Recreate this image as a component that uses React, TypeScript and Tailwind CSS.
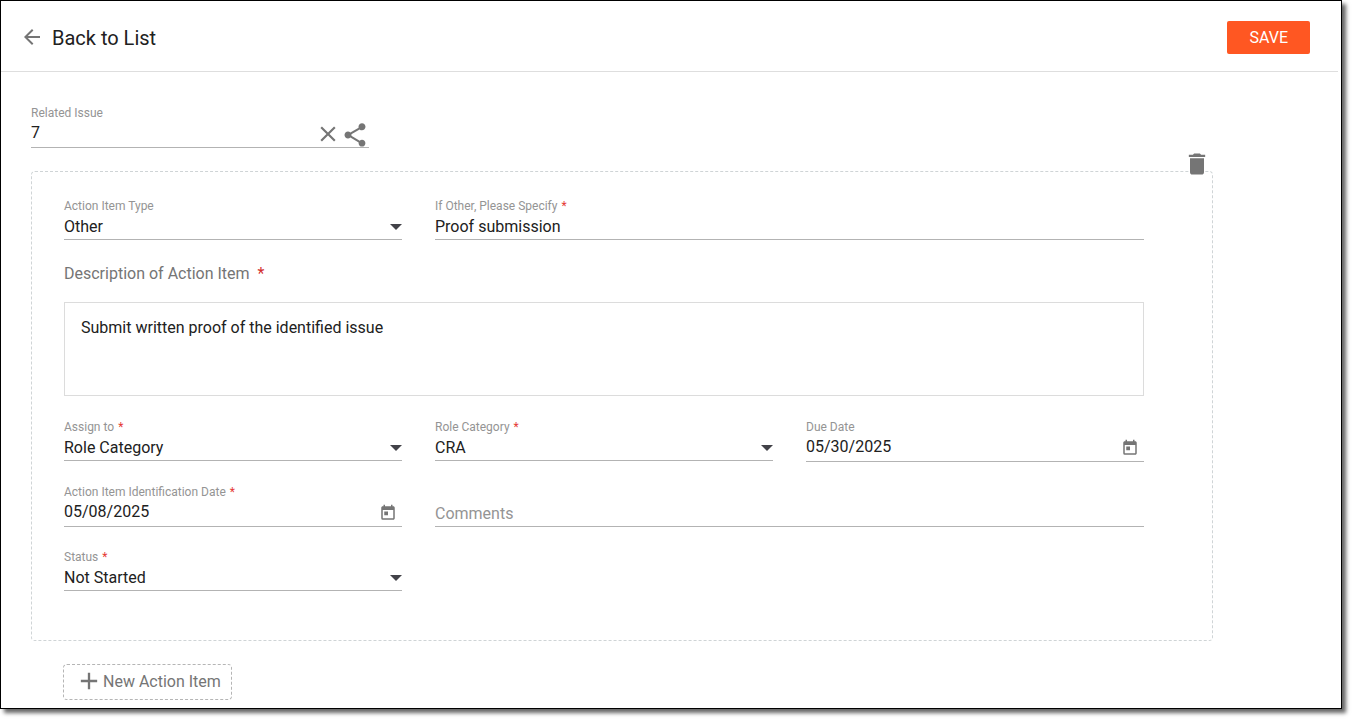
import { useState } from "react";
import type { ReactNode } from "react";
import {
  MdAdd,
  MdArrowBack,
  MdClose,
  MdDelete,
  MdShare,
  MdToday,
} from "react-icons/md";

type FieldProps = {
  id: string;
  label: string;
  required?: boolean;
};

const fieldBox = "border-b border-[#b3b3b3]";
const inputStyles =
  "w-full min-w-0 bg-transparent p-0 text-base leading-6 text-[#212121] outline-none placeholder:text-[#949494]";

const Label = ({ id, label, required }: FieldProps) => (
  <label htmlFor={id} className="block text-xs leading-4 text-[#949494]">
    {label}
    {required && <span className="ml-1 text-[#e53935]">*</span>}
  </label>
);

const SelectField = ({
  id,
  label,
  required,
  options,
}: FieldProps & { options: string[] }) => (
  <div className={fieldBox}>
    <Label id={id} label={label} required={required} />
    <div className="relative flex h-[25px] items-center">
      <select id={id} className={`${inputStyles} appearance-none`}>
        {options.map((option) => (
          <option key={option}>{option}</option>
        ))}
      </select>
      <svg
        viewBox="0 0 12 6"
        className="pointer-events-none absolute right-0 h-1.5 w-3 fill-[#424248]"
      >
        <path d="M0 0h12L6 6z" />
      </svg>
    </div>
  </div>
);

const TextField = ({
  id,
  label,
  required,
  value,
}: FieldProps & { value: string }) => (
  <div className={fieldBox}>
    <Label id={id} label={label} required={required} />
    <div className="flex h-[25px] items-center">
      <input id={id} type="text" defaultValue={value} className={inputStyles} />
    </div>
  </div>
);

// text field with icon buttons at its right end
const IconField = ({
  id,
  label,
  required,
  value,
  children,
}: FieldProps & { value: string; children: ReactNode }) => (
  <div className={fieldBox}>
    <Label id={id} label={label} required={required} />
    <div className="flex h-[26px] items-start">
      <input id={id} type="text" defaultValue={value} className={inputStyles} />
      {children}
    </div>
  </div>
);

const DateField = (props: FieldProps & { value: string }) => (
  <IconField {...props}>
    <button
      type="button"
      aria-label="Open calendar"
      className="mt-1 mr-[5px] text-[#757575]"
    >
      <MdToday size={18} />
    </button>
  </IconField>
);

const ActionItem = () => {
  const [description, setDescription] = useState(
    "Submit written proof of the identified issue"
  );

  return (
    <section className="relative mt-[23px] mr-32 ml-[30px] rounded border border-dashed border-[#cfd4d6] pt-[26px] pr-[68px] pb-[49px] pl-8">
      <button
        type="button"
        aria-label="Delete action item"
        className="absolute -top-[22px] right-px text-[#757575]"
      >
        <MdDelete size={28} />
      </button>

      <div className="grid grid-cols-3 items-start gap-x-[33px]">
        <SelectField
          id="type"
          label="Action Item Type"
          options={["Other", "Training", "Follow Up"]}
        />
        <div className="col-span-2">
          <TextField
            id="specify"
            label="If Other, Please Specify"
            required
            value="Proof submission"
          />
        </div>
      </div>

      <label
        htmlFor="description"
        className="mt-[22px] block text-base leading-6 text-[#757575]"
      >
        Description of Action Item
        <span className="ml-2 text-[#d32f2f]">*</span>
      </label>
      <textarea
        id="description"
        value={description}
        onChange={(e) => setDescription(e.target.value)}
        className="mt-4 block h-[94px] w-full resize-none border border-[#dcdcdc] px-4 py-[13px] text-base leading-6 text-[#212121] outline-none"
      />

      <div className="mt-[23px] grid grid-cols-3 items-start gap-x-[33px] gap-y-[22px]">
        <SelectField
          id="assign"
          label="Assign to"
          required
          options={["Role Category", "User"]}
        />
        <SelectField
          id="role"
          label="Role Category"
          required
          options={["CRA", "PI", "Sponsor"]}
        />
        <DateField id="due" label="Due Date" value="05/30/2025" />
        <DateField
          id="identified"
          label="Action Item Identification Date"
          required
          value="05/08/2025"
        />
        <div className={`${fieldBox} col-span-2 pt-[18px]`}>
          <input
            type="text"
            placeholder="Comments"
            aria-label="Comments"
            className={`${inputStyles} block`}
          />
        </div>
        <SelectField
          id="status"
          label="Status"
          required
          options={["Not Started", "In Progress", "Completed"]}
        />
      </div>
    </section>
  );
};

const App = () => {
  return (
    <div className="bg-white pr-3 pb-3 font-['Roboto',sans-serif]">
      <div className="border border-black bg-white pb-2 shadow-[4px_4px_4px_rgba(0,0,0,0.6)]">
        <header className="mr-[3px] flex h-[71px] items-center justify-between border-b border-[#dedede] pt-0.5 pr-7 pl-[19px]">
          <a href="#list" className="flex items-center gap-2">
            <MdArrowBack size={24} className="text-[#757575]" />
            <h1 className="pt-0.5 text-xl text-[#212121]">Back to List</h1>
          </a>
          <button
            type="button"
            className="h-[33px] rounded-xs bg-[#ff5722] px-[22px] pt-0.5 text-base text-white"
          >
            SAVE
          </button>
        </header>

        <main>
          <div className="mt-[33px] ml-[30px] w-[338px]">
            <IconField id="issue" label="Related Issue" value="7">
              <button
                type="button"
                aria-label="Clear related issue"
                className="text-[#757575]"
              >
                <MdClose size={26} />
              </button>
              <button
                type="button"
                aria-label="Share related issue"
                className="text-[#757575]"
              >
                <MdShare size={28} />
              </button>
            </IconField>
          </div>

          <ActionItem />

          <button
            type="button"
            className="mt-[23px] ml-[62px] flex h-9 items-center rounded border border-dashed border-[#b5b5b5] pr-2.5 pl-[11px] text-base text-[#757575]"
          >
            <MdAdd size={28} className="mb-0.5" />
            New Action Item
          </button>
        </main>
      </div>
    </div>
  );
};

export default App;
